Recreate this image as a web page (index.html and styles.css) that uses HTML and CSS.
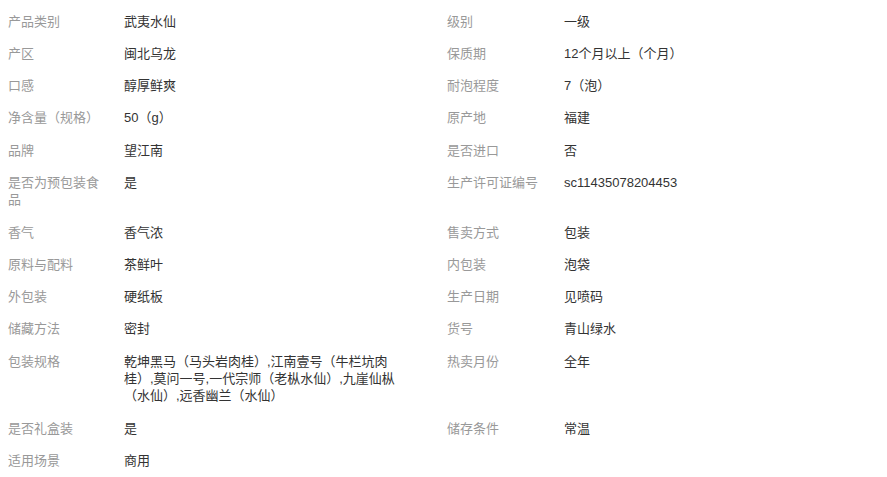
FILE: index.html
```html
<!DOCTYPE html>
<html lang="zh-CN">
<head>
<meta charset="utf-8">
<title>产品参数</title>
<link rel="stylesheet" href="styles.css">
</head>
<body>
<div class="params">
  <div class="k">产品类别</div><div class="v vl">武夷水仙</div><div class="k">级别</div><div class="v">一级</div>
  <div class="k">产区</div><div class="v vl">闽北乌龙</div><div class="k">保质期</div><div class="v">12个月以上（个月）</div>
  <div class="k">口感</div><div class="v vl">醇厚鲜爽</div><div class="k">耐泡程度</div><div class="v">7（泡）</div>
  <div class="k">净含量（规格）</div><div class="v vl">50（g）</div><div class="k">原产地</div><div class="v">福建</div>
  <div class="k">品牌</div><div class="v vl">望江南</div><div class="k">是否进口</div><div class="v">否</div>
  <div class="k">是否为预包装食品</div><div class="v vl">是</div><div class="k">生产许可证编号</div><div class="v">sc11435078204453</div>
  <div class="k">香气</div><div class="v vl">香气浓</div><div class="k">售卖方式</div><div class="v">包装</div>
  <div class="k">原料与配料</div><div class="v vl">茶鲜叶</div><div class="k">内包装</div><div class="v">泡袋</div>
  <div class="k">外包装</div><div class="v vl">硬纸板</div><div class="k">生产日期</div><div class="v">见喷码</div>
  <div class="k">储藏方法</div><div class="v vl">密封</div><div class="k">货号</div><div class="v">青山绿水</div>
  <div class="k">包装规格</div><div class="v vl">乾坤黑马（马头岩肉桂）,江南壹号（牛栏坑肉桂）,莫问一号,一代宗师（老枞水仙）,九崖仙枞（水仙）,远香幽兰（水仙）</div><div class="k">热卖月份</div><div class="v">全年</div>
  <div class="k">是否礼盒装</div><div class="v vl">是</div><div class="k">储存条件</div><div class="v">常温</div>
  <div class="k">适用场景</div><div class="v vl">商用</div><div class="k"></div><div class="v"></div>
</div>
</body>
</html>
```

FILE: styles.css
```css
html, body {
  margin: 0;
  padding: 0;
  background: #fff;
}

body {
  font-family: "Liberation Sans", "Noto Sans CJK SC", sans-serif;
  font-size: 13px;
  line-height: 17.3px;
}

.params {
  display: grid;
  grid-template-columns: 116px 323px 117px 1fr;
  padding: 5px 0 0 8px;
}

.k,
.v {
  padding: 7.5px 0;
  word-break: break-all;
}

.k {
  color: #999;
  padding-right: 16px;
}

.v {
  color: #333;
}

.vl {
  padding-right: 49px;
}
```
